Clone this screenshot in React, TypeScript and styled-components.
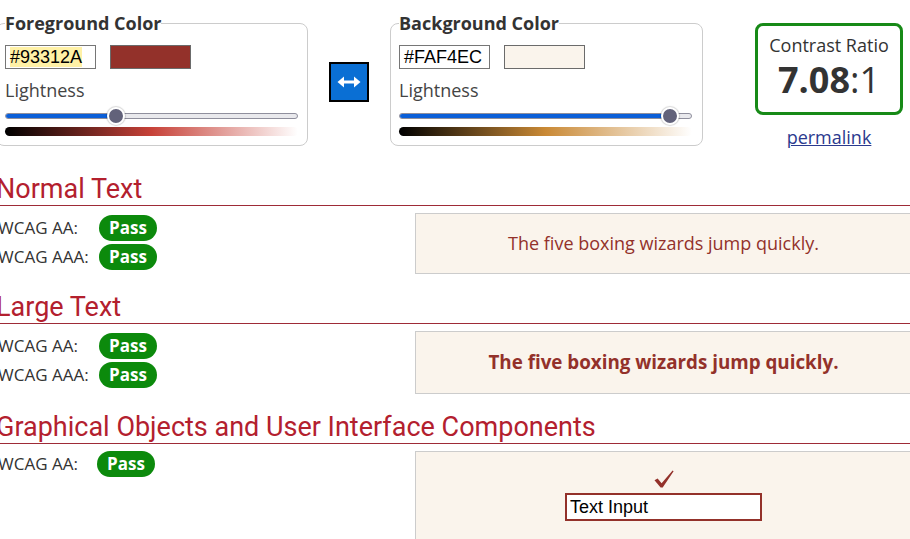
import React from "react";
import styled, { createGlobalStyle } from "styled-components";

const FG = "#93312A";
const BG = "#FAF4EC";

const Global = createGlobalStyle`
  html, body { margin: 0; padding: 0; background: #fff; overflow: hidden; }
  body {
    font-family: "Open Sans", "DejaVu Sans", sans-serif;
    font-size: 17px;
    color: #333;
  }
`;

const Page = styled.div`
  width: 916px;
  margin-left: -4px;
  padding-top: 11px;
`;

const TopRow = styled.div`
  display: flex;
  align-items: flex-start;
  padding-bottom: 5px;
`;

const ColorFieldset = styled.fieldset<{ $w: number }>`
  box-sizing: border-box;
  width: ${(p) => p.$w}px;
  margin: 0;
  padding: 10px 9px 9px 8px;
  border: 1px solid #ccc;
  border-radius: 8px;
  min-inline-size: auto;
`;

const Legend = styled.legend`
  padding: 0;
  font-size: 18px;
  line-height: 24px;
  font-weight: 700;
  color: #333;
`;

const InputRow = styled.div`
  display: flex;
  gap: 14px;
  height: 24px;
`;

const HexBox = styled.div`
  box-sizing: border-box;
  width: 91px;
  height: 24px;
  border: 1px solid #767676;
  background: #fff;
  padding: 1px 0 0 4px;
  font-family: "Liberation Sans", Arial, sans-serif;
  font-size: 18px;
  line-height: 20px;
  color: #000;
`;

const HexText = styled.span<{ $mark?: boolean }>`
  background: ${(p) => (p.$mark ? "#fff1a6" : "transparent")};
`;

const Swatch = styled.div<{ $c: string }>`
  box-sizing: border-box;
  width: 81px;
  height: 24px;
  border: 1px solid #6b6b6b;
  background: ${(p) => p.$c};
`;

const Label = styled.div`
  margin-top: 9px;
  font-size: 18px;
  line-height: 24px;
  color: #444;
`;

const SliderWrap = styled.div`
  position: relative;
  width: 293px;
  height: 20px;
  margin-top: 4px;
  display: flex;
  align-items: center;
`;

const Track = styled.div`
  box-sizing: border-box;
  width: 100%;
  height: 6px;
  border-radius: 3px;
  background: #e9e9ed;
  border: 1px solid #8f8f9d;
  overflow: hidden;
`;

const Fill = styled.div`
  height: 100%;
  background: #0b5fd8;
`;

const Thumb = styled.div`
  position: absolute;
  top: 1px;
  width: 18px;
  height: 18px;
  box-sizing: border-box;
  border-radius: 50%;
  background: #62627a;
  border: 2px solid #fff;
  box-shadow: 0 0 1px 1px rgba(0, 0, 0, 0.15);
`;

const GradientBar = styled.div<{ $h: number; $s: number }>`
  width: 293px;
  height: 9px;
  margin-top: 1px;
  border-radius: 5px;
  background: linear-gradient(
    to right,
    hsl(${(p) => p.$h}, ${(p) => p.$s}%, 0%),
    hsl(${(p) => p.$h}, ${(p) => p.$s}%, 50%),
    hsl(${(p) => p.$h}, ${(p) => p.$s}%, 100%)
  );
`;

const SwapButton = styled.button`
  box-sizing: border-box;
  width: 40px;
  height: 40px;
  margin: 51px 21px 0 21px;
  padding: 0;
  border: 2px solid #000;
  background: #0a6fd4;
  display: flex;
  align-items: center;
  justify-content: center;
`;

const RatioColumn = styled.div`
  margin-left: 52px;
  width: 148px;
  display: flex;
  flex-direction: column;
  align-items: center;
`;

const RatioBox = styled.div`
  box-sizing: border-box;
  width: 148px;
  margin-top: 12px;
  padding: 7px 0 11px;
  border: 3px solid #178a17;
  border-radius: 8px;
  text-align: center;
`;

const RatioTitle = styled.div`
  font-size: 18px;
  line-height: 24px;
  color: #333;
`;

const RatioValue = styled.div`
  font-size: 36px;
  line-height: 43px;
  margin-top: 1px;
  color: #333;
`;

const RatioBold = styled.span`
  font-weight: 700;
`;

const Permalink = styled.a`
  margin-top: 9px;
  font-size: 18px;
  line-height: 27px;
  color: #2b3a8e;
  text-decoration: underline;
`;

const SectionTitle = styled.h2`
  margin: 18px 0 0;
  padding: 0;
  font-family: Roboto, "Open Sans", sans-serif;
  font-weight: 400;
  font-size: 27px;
  line-height: 31px;
  color: #b3202e;
  border-bottom: 1px solid #9e2b37;
`;

const SectionBody = styled.div`
  display: flex;
  margin-top: 7px;
`;

const Results = styled.div<{ $shift?: boolean }>`
  width: 419px;
  margin-top: ${(p) => (p.$shift ? "-2px" : "0")};
`;

const ResultRow = styled.div`
  display: flex;
  align-items: center;
  height: 29px;
`;

const Level = styled.span<{ $narrow?: boolean }>`
  width: ${(p) => (p.$narrow ? "101px" : "103px")};
  padding-left: 2px;
  box-sizing: border-box;
  font-size: 17px;
  color: #333;
`;

const Badge = styled.span`
  display: inline-block;
  box-sizing: border-box;
  width: 58px;
  height: 26px;
  border-radius: 13px;
  background: #0c8a0c;
  color: #fff;
  font-weight: 700;
  font-size: 17px;
  line-height: 26px;
  text-align: center;
`;

const SampleBox = styled.div<{ $large?: boolean; $tall?: boolean }>`
  box-sizing: border-box;
  width: 497px;
  border: 1px solid #ccc;
  background: ${BG};
  color: ${FG};
  text-align: center;
  padding: 16px;
  font-size: ${(p) => (p.$large ? "18.8px" : "18px")};
  font-weight: ${(p) => (p.$large ? 700 : 400)};
  line-height: ${(p) => (p.$large ? "29px" : "27px")};
  min-height: ${(p) => (p.$tall ? "120px" : "auto")};
  display: flex;
  flex-direction: column;
  align-items: center;
`;

const CheckMark = styled.svg`
  display: block;
  margin-top: 2px;
`;

const DemoInput = styled.div`
  box-sizing: border-box;
  width: 197px;
  height: 28px;
  margin-top: 5px;
  border: 2px solid ${FG};
  background: #fff;
  padding-left: 3px;
  font-family: "Liberation Sans", Arial, sans-serif;
  font-size: 18px;
  line-height: 24px;
  color: #000;
  text-align: left;
  font-weight: 400;
`;

const Slider = ({ pct }: { pct: number }) => {
  const left = 9 + pct * (293 - 18);
  return (
    <SliderWrap>
      <Track>
        <Fill style={{ width: `${left}px` }} />
      </Track>
      <Thumb style={{ left: `${left - 9}px` }} />
    </SliderWrap>
  );
};

const ColorPanel = ({
  title,
  hex,
  mark,
  w,
  hue,
  sat,
  light,
}: {
  title: string;
  hex: string;
  mark?: boolean;
  w: number;
  hue: number;
  sat: number;
  light: number;
}) => (
  <ColorFieldset $w={w}>
    <Legend>{title}</Legend>
    <InputRow>
      <HexBox>
        <HexText $mark={mark}>{hex}</HexText>
      </HexBox>
      <Swatch $c={hex} />
    </InputRow>
    <Label>Lightness</Label>
    <Slider pct={light} />
    <GradientBar $h={hue} $s={sat} />
  </ColorFieldset>
);

const SwapIcon = () => (
  <svg width="24" height="14" viewBox="0 0 24 14">
    <path d="M4 7h16" stroke="#fff" strokeWidth="3" />
    <path d="M0.5 7 L7 1.5 L7 12.5 Z" fill="#fff" />
    <path d="M23.5 7 L17 1.5 L17 12.5 Z" fill="#fff" />
  </svg>
);

const Check = () => (
  <CheckMark width="20" height="18" viewBox="0 0 20 18">
    <path
      d="M0.5 10.3 L3.6 8.4 L7.6 13.2 L18.6 0.4 L19.6 1.3 L8.7 17.6 L6.6 17.6 Z"
      fill={FG}
    />
  </CheckMark>
);

const Rows = ({ levels, narrow }: { levels: string[]; narrow?: boolean }) => (
  <Results $shift={narrow}>
    {levels.map((l) => (
      <ResultRow key={l}>
        <Level $narrow={narrow}>{l}</Level>
        <Badge>Pass</Badge>
      </ResultRow>
    ))}
  </Results>
);

export default function App() {
  return (
    <>
      <Global />
      <Page>
        <TopRow>
          <ColorPanel title="Foreground Color" hex="#93312A" mark w={312} hue={4} sat={56} light={0.37} />
          <SwapButton aria-label="Swap colors">
            <SwapIcon />
          </SwapButton>
          <ColorPanel title="Background Color" hex="#FAF4EC" w={313} hue={34} sat={58} light={0.953} />
          <RatioColumn>
            <RatioBox>
              <RatioTitle>Contrast Ratio</RatioTitle>
              <RatioValue>
                <RatioBold>7.08</RatioBold>:1
              </RatioValue>
            </RatioBox>
            <Permalink href="#">permalink</Permalink>
          </RatioColumn>
        </TopRow>

        <SectionTitle>Normal Text</SectionTitle>
        <SectionBody>
          <Rows levels={["WCAG AA:", "WCAG AAA:"]} />
          <SampleBox>The five boxing wizards jump quickly.</SampleBox>
        </SectionBody>

        <SectionTitle>Large Text</SectionTitle>
        <SectionBody>
          <Rows levels={["WCAG AA:", "WCAG AAA:"]} />
          <SampleBox $large>The five boxing wizards jump quickly.</SampleBox>
        </SectionBody>

        <SectionTitle>Graphical Objects and User Interface Components</SectionTitle>
        <SectionBody>
          <Rows levels={["WCAG AA:"]} narrow />
          <SampleBox $tall>
            <Check />
            <DemoInput>Text Input</DemoInput>
          </SampleBox>
        </SectionBody>
      </Page>
    </>
  );
}
